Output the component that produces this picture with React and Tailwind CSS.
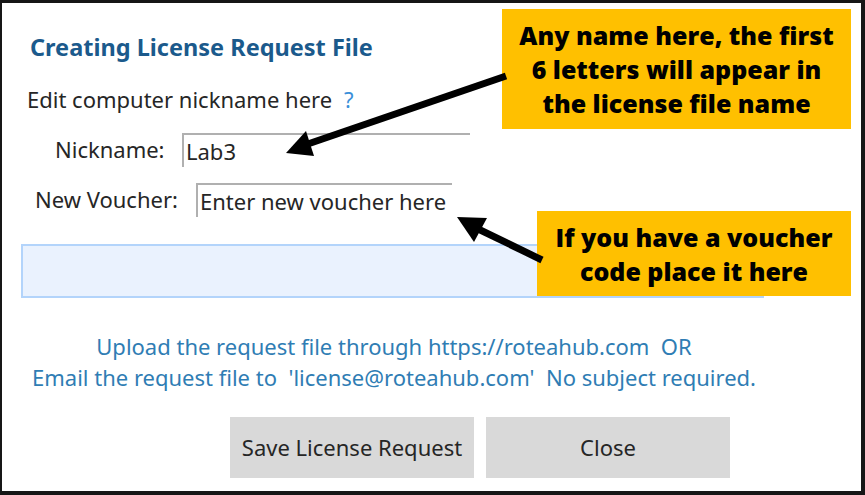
import React from "react";

export default function App() {
  const ui = { fontFamily: '"Noto Sans", "Open Sans", sans-serif' };
  const call = { fontFamily: '"Open Sans", "Noto Sans", sans-serif' };
  return (
    <div className="relative w-[865px] h-[495px] bg-white border-[#161616] border-t-[3px] border-l-[2px] border-r-[4px] border-b-[4px] overflow-hidden" style={ui}>
      <div className="flex flex-col">
        <div className="pl-[28px] pt-[29px] text-[23.5px] leading-[30px] font-bold text-[#1b5a8c]">Creating License Request File</div>
        <div className="pl-[25px] mt-[22px] flex items-center text-[22px] leading-[30px] text-[#262626]">
          <span>Edit computer nickname here</span>
          <span className="ml-[12px] text-[#3b8fd9]">?</span>
        </div>
        <div className="mt-[19px] flex items-start">
          <div className="w-[180px] pl-[53px] pt-[1px] text-[22px] leading-[30px] text-[#262626]">Nickname:</div>
          <div className="w-[288px] h-[34px] border-t-2 border-l-2 border-[#b0b0b0] pl-[2px] pt-[1px] text-[22px] leading-[30px] text-[#262626]">Lab3</div>
        </div>
        <div className="mt-[16px] flex items-start">
          <div className="w-[194px] pl-[33px] pt-[1px] text-[22px] leading-[30px] text-[#262626]">New Voucher:</div>
          <div className="w-[256px] h-[34px] border-t-2 border-l-2 border-[#b0b0b0] pl-[2px] pt-[1px] text-[22px] leading-[30px] text-[#262626] whitespace-nowrap">Enter new voucher here</div>
        </div>
        <div className="ml-[19px] mt-[27px] w-[743px] h-[54px] bg-[#eaf2fe] border-2 border-[#b3d4fb]"></div>
        <div className="mt-[33px] w-[784px] text-center text-[22px] leading-[31px] text-[#2f7db4] whitespace-nowrap">
          <div>Upload the request file through https://roteahub.com&nbsp; OR</div>
          <div>Email the request file to&nbsp; 'license@roteahub.com'&nbsp; No subject required.</div>
        </div>
        <div className="mt-[24px] ml-[228px] flex gap-[12px]">
          <div className="w-[244px] h-[61px] bg-[#d9d9d9] flex items-center justify-center text-[22px] text-[#262626]">Save License Request</div>
          <div className="w-[244px] h-[61px] bg-[#d9d9d9] flex items-center justify-center text-[22px] text-[#262626]">Close</div>
        </div>
      </div>

      <div className="absolute left-[500px] top-[6px] w-[349px] h-[120px] bg-[#ffc000] flex flex-col items-center justify-center text-[25px] leading-[34px] font-extrabold text-black whitespace-nowrap" style={call}>
        <div>Any name here, the first</div>
        <div>6 letters will appear in</div>
        <div>the license file name</div>
      </div>
      <div className="absolute left-[535px] top-[208px] w-[314px] h-[85px] bg-[#ffc000] flex flex-col items-center justify-center text-[25px] leading-[34px] font-extrabold text-black whitespace-nowrap" style={call}>
        <div>If you have a voucher</div>
        <div>code place it here</div>
      </div>

      <svg className="absolute left-0 top-0 pointer-events-none" width="865" height="495" viewBox="-2 -3 865 495">
        <line x1="502" y1="70" x2="298" y2="140" stroke="#000" strokeWidth="7" />
        <polygon points="282,147 302,125 310,150" fill="#000" />
        <line x1="538" y1="254" x2="470" y2="221" stroke="#000" strokeWidth="7" />
        <polygon points="453,211 483,212 470,236" fill="#000" />
      </svg>
    </div>
  );
}
